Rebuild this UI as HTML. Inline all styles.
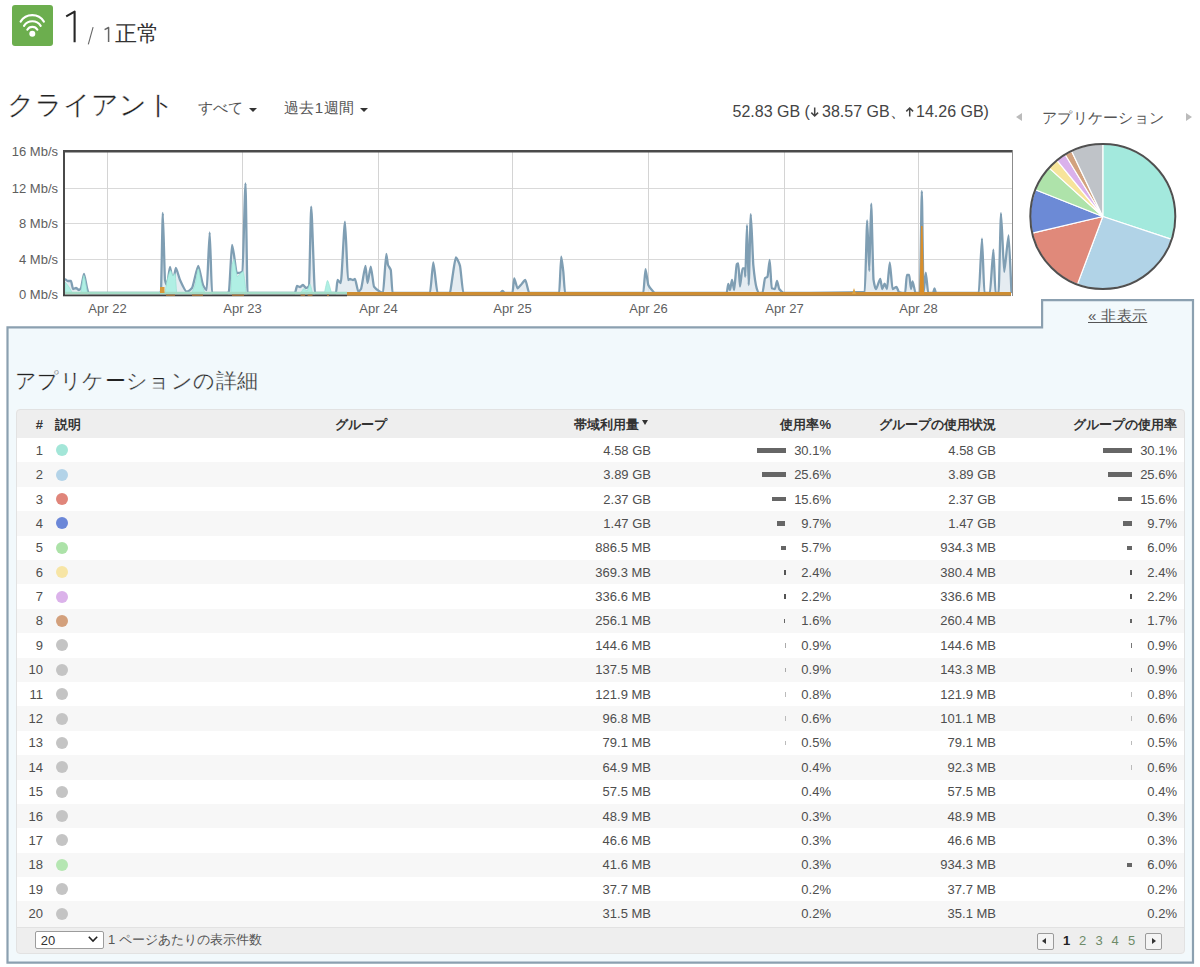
<!DOCTYPE html>
<html><head><meta charset="utf-8">
<style>
html,body{margin:0;padding:0;background:#fff;width:1200px;height:967px;overflow:hidden;position:relative;font-family:"Liberation Sans",sans-serif;color:#333}
.a{position:absolute;white-space:pre;line-height:1}
#hdr{left:0;top:0}
.tri{position:absolute;width:0;height:0}
.ylab{left:0;width:58px;text-align:right;font-size:13px;color:#5e5e5e;line-height:15px}
.xlab{top:301px;width:60px;text-align:center;font-size:13px;color:#5e5e5e;line-height:15px}
</style></head><body>

<!-- status header -->
<div class="a" style="left:12px;top:5px;width:41px;height:41px;background:#6cae4e;border-radius:3px"></div>
<svg class="a" style="left:12px;top:5px" width="41" height="41" viewBox="0 0 41 41">
  <g fill="none" stroke="#fff" stroke-width="2.1" stroke-linecap="round">
    <path d="M8.6 16.6 A13.7 13.7 0 0 1 31.9 16.6"/>
    <path d="M12 20.8 A10 10 0 0 1 28.7 20.8"/>
    <path d="M15.3 24.7 A5.9 5.9 0 0 1 25.4 24.7"/>
  </g>
  <circle cx="20.3" cy="28.8" r="3" fill="#fff"/>
</svg>
<svg class="a" style="left:60px;top:5px" width="55" height="45" viewBox="60 5 55 45">
  <path d="M66.2,16.3 L74.6,11.6 L74.6,42.3" fill="none" stroke="#262626" stroke-width="2.1" stroke-linejoin="round"/>
  <path d="M88.3,44.3 L93.1,27.2" fill="none" stroke="#666" stroke-width="1.1"/>
  <path d="M104.6,29.6 L108.6,27.5 L108.6,42" fill="none" stroke="#666" stroke-width="1.5" stroke-linejoin="round"/>
</svg>
<div class="a" style="left:115px;top:23px;font-size:22px;color:#333">正常</div>

<!-- clients title -->
<div class="a" style="left:7px;top:92px;font-size:26.5px;color:#222;-webkit-text-stroke:0.35px #fff">クライアント</div>
<div class="a" style="left:198px;top:99.5px;font-size:15px;color:#555">すべて</div>
<div class="tri" style="left:249px;top:108px;border-left:4px solid transparent;border-right:4px solid transparent;border-top:4px solid #333"></div>
<div class="a" style="left:283.5px;top:99.5px;font-size:15px;letter-spacing:0.6px;color:#555">過去1週間</div>
<div class="tri" style="left:360px;top:108px;border-left:4px solid transparent;border-right:4px solid transparent;border-top:4px solid #333"></div>

<div class="a" style="left:732.5px;top:104px;font-size:16px;color:#444">52.83 GB (</div>
<svg class="a" style="left:809.5px;top:106px" width="10" height="12" viewBox="0 0 10 12"><path d="M4.7 1.5 V10 M1.3 6.6 L4.7 10 L8.1 6.6" fill="none" stroke="#444" stroke-width="1.5"/></svg>
<div class="a" style="left:822px;top:104px;font-size:16px;color:#444">38.57 GB、</div>
<svg class="a" style="left:904.5px;top:106px" width="10" height="12" viewBox="0 0 10 12"><path d="M4.7 10.5 V2 M1.3 5.4 L4.7 2 L8.1 5.4" fill="none" stroke="#444" stroke-width="1.5"/></svg>
<div class="a" style="left:916px;top:104px;font-size:16px;color:#444">14.26 GB)</div>

<div class="tri" style="left:1016px;top:113px;border-top:4.5px solid transparent;border-bottom:4.5px solid transparent;border-right:6px solid #bbb"></div>
<div class="a" style="left:1042px;top:109.5px;font-size:15.4px;letter-spacing:0.3px;color:#555">アプリケーション</div>
<div class="tri" style="left:1186px;top:113px;border-top:4.5px solid transparent;border-bottom:4.5px solid transparent;border-left:6px solid #bbb"></div>

<!-- CHART -->
<svg class="a" style="left:0;top:0" width="1200" height="330" viewBox="0 0 1200 330">
<line x1="65" y1="188.5" x2="1012" y2="188.5" stroke="#d9d9d9" stroke-width="1"/>
<line x1="65" y1="223.5" x2="1012" y2="223.5" stroke="#d9d9d9" stroke-width="1"/>
<line x1="65" y1="259.5" x2="1012" y2="259.5" stroke="#d9d9d9" stroke-width="1"/>
<line x1="107.5" y1="152" x2="107.5" y2="294" stroke="#d4d4d4" stroke-width="1"/>
<line x1="242.5" y1="152" x2="242.5" y2="294" stroke="#d4d4d4" stroke-width="1"/>
<line x1="378.5" y1="152" x2="378.5" y2="294" stroke="#d4d4d4" stroke-width="1"/>
<line x1="512.5" y1="152" x2="512.5" y2="294" stroke="#d4d4d4" stroke-width="1"/>
<line x1="648.5" y1="152" x2="648.5" y2="294" stroke="#d4d4d4" stroke-width="1"/>
<line x1="784.5" y1="152" x2="784.5" y2="294" stroke="#d4d4d4" stroke-width="1"/>
<line x1="918.5" y1="152" x2="918.5" y2="294" stroke="#d4d4d4" stroke-width="1"/>
<path d="M65.00,279.00 C65.60,279.40 67.40,281.00 68.00,281.00 C68.60,281.00 70.40,281.00 71.00,281.00 C71.40,281.00 72.60,289.00 73.00,289.00 C73.60,289.00 75.40,288.00 76.00,288.00 C76.60,288.00 78.40,290.00 79.00,290.00 C79.40,290.00 80.60,288.63 81.00,288.00 C81.60,287.05 83.40,274.00 84.00,274.00 C84.60,274.00 86.40,285.71 87.00,288.00 C87.30,289.15 88.20,293.00 88.50,293.00 C102.80,293.00 145.70,293.00 160.00,293.00 C160.20,293.00 160.80,291.70 161.00,291.00 C161.36,289.73 162.44,213.00 162.80,213.00 C163.24,213.00 164.56,277.99 165.00,280.00 C165.40,281.82 166.60,285.00 167.00,285.00 C167.60,285.00 169.40,267.00 170.00,267.00 C170.60,267.00 172.40,282.00 173.00,282.00 C173.56,282.00 175.24,268.00 175.80,268.00 C176.64,268.00 179.16,278.14 180.00,280.00 C181.34,282.96 185.36,291.70 186.70,291.70 C187.76,291.70 190.94,289.21 192.00,288.00 C193.26,286.56 197.04,266.00 198.30,266.00 C199.24,266.00 202.06,283.13 203.00,285.00 C203.74,286.47 205.96,290.00 206.70,290.00 C207.30,290.00 209.10,232.50 209.70,232.50 C210.16,232.50 211.54,293.00 212.00,293.00 C215.20,293.00 224.80,293.00 228.00,293.00 C228.20,293.00 228.80,291.63 229.00,291.00 C229.60,289.12 231.40,245.00 232.00,245.00 C232.40,245.00 233.60,252.73 234.00,255.00 C234.54,258.06 236.16,273.00 236.70,273.00 C237.86,273.00 241.34,272.28 242.50,271.70 C243.10,271.40 244.90,183.30 245.50,183.30 C245.90,183.30 247.10,293.00 247.50,293.00 C257.00,293.00 285.50,293.00 295.00,293.00 C295.40,293.00 296.60,286.00 297.00,286.00 C297.60,286.00 299.40,287.00 300.00,287.00 C300.60,287.00 302.40,285.00 303.00,285.00 C303.60,285.00 305.40,288.00 306.00,288.00 C306.60,288.00 308.40,286.83 309.00,286.00 C309.44,285.39 310.76,206.70 311.20,206.70 C311.96,206.70 314.24,293.00 315.00,293.00 C319.20,293.00 331.80,293.00 336.00,293.00 C336.30,293.00 337.20,280.00 337.50,280.00 C338.16,280.00 340.14,283.00 340.80,283.00 C341.64,283.00 344.16,221.70 345.00,221.70 C345.60,221.70 347.40,280.00 348.00,280.00 C348.40,280.00 349.60,279.00 350.00,279.00 C350.60,279.00 352.40,280.00 353.00,280.00 C353.40,280.00 354.60,279.00 355.00,279.00 C355.66,279.00 357.64,291.70 358.30,291.70 C358.84,291.70 360.46,289.86 361.00,289.00 C361.90,287.57 364.60,266.00 365.50,266.00 C365.90,266.00 367.10,283.00 367.50,283.00 C368.16,283.00 370.14,266.70 370.80,266.70 C371.44,266.70 373.36,285.68 374.00,286.70 C375.20,288.61 378.80,291.04 380.00,291.70 C380.60,292.03 382.40,293.00 383.00,293.00 C383.66,293.00 385.64,254.00 386.30,254.00 C386.64,254.00 387.66,264.00 388.00,265.00 C388.56,266.64 390.24,268.12 390.80,270.00 C391.14,271.14 392.16,293.00 392.50,293.00 C400.00,293.00 422.50,293.00 430.00,293.00 C430.66,293.00 432.64,262.50 433.30,262.50 C434.14,262.50 436.66,293.00 437.50,293.00 C439.80,293.00 446.70,293.00 449.00,293.00 C449.20,293.00 449.80,292.67 450.00,292.50 C450.50,292.09 452.00,279.74 452.50,276.70 C453.16,272.69 455.14,257.50 455.80,257.50 C456.64,257.50 459.16,263.05 460.00,265.80 C460.66,267.96 462.64,293.00 463.30,293.00 C470.64,293.00 492.66,293.00 500.00,293.00 C500.50,293.00 502.00,290.80 502.50,290.80 C503.00,290.80 504.50,293.00 505.00,293.00 C506.50,293.00 511.00,293.00 512.50,293.00 C512.84,293.00 513.86,278.30 514.20,278.30 C514.86,278.30 516.84,288.30 517.50,288.30 C518.34,288.30 520.86,284.90 521.70,284.00 C522.42,283.23 524.58,280.00 525.30,280.00 C526.08,280.00 528.42,293.00 529.20,293.00 C535.20,293.00 553.20,293.00 559.20,293.00 C559.60,293.00 560.80,256.70 561.20,256.70 C561.62,256.70 562.88,267.84 563.30,271.70 C563.64,274.82 564.66,293.00 565.00,293.00 C580.66,293.00 627.64,293.00 643.30,293.00 C643.74,293.00 645.06,269.20 645.50,269.20 C646.06,269.20 647.74,283.71 648.30,285.00 C649.14,286.94 651.66,289.91 652.50,290.80 C653.00,291.33 654.50,293.00 655.00,293.00 C669.34,293.00 712.36,293.00 726.70,293.00 C727.02,293.00 727.98,284.00 728.30,284.00 C728.64,284.00 729.66,290.00 730.00,290.00 C730.40,290.00 731.60,280.00 732.00,280.00 C732.44,280.00 733.76,290.00 734.20,290.00 C734.70,290.00 736.20,264.70 736.70,264.20 C737.02,263.88 737.98,263.30 738.30,263.30 C738.64,263.30 739.66,286.70 740.00,286.70 C740.50,286.70 742.00,268.30 742.50,268.30 C742.94,268.30 744.26,268.30 744.70,268.30 C744.82,268.30 745.18,276.70 745.30,276.70 C745.64,276.70 746.66,225.00 747.00,225.00 C747.34,225.00 748.36,285.00 748.70,285.00 C749.12,285.00 750.38,214.20 750.80,214.20 C751.30,214.20 752.80,259.74 753.30,265.00 C753.98,272.15 756.02,286.35 756.70,288.30 C757.20,289.73 758.70,293.00 759.20,293.00 C759.86,293.00 761.84,293.00 762.50,293.00 C763.00,293.00 764.50,278.88 765.00,278.30 C765.50,277.72 767.00,277.30 767.50,276.70 C767.94,276.17 769.26,260.00 769.70,260.00 C770.10,260.00 771.30,288.12 771.70,288.30 C772.36,288.60 774.34,289.00 775.00,289.00 C775.40,289.00 776.60,280.80 777.00,280.80 C777.44,280.80 778.76,288.37 779.20,289.00 C780.20,290.44 783.20,293.00 784.20,293.00 C800.32,293.00 848.68,292.58 864.80,292.00 C865.28,291.98 866.72,220.40 867.20,220.40 C867.62,220.40 868.88,271.00 869.30,271.00 C869.68,271.00 870.82,203.70 871.20,203.70 C871.66,203.70 873.04,276.43 873.50,279.70 C873.98,283.11 875.42,289.20 875.90,289.20 C876.78,289.20 879.42,279.00 880.30,279.00 C880.68,279.00 881.82,289.00 882.20,289.00 C882.68,289.00 884.12,283.70 884.60,283.70 C885.08,283.70 886.52,289.00 887.00,289.00 C887.56,289.00 889.24,262.30 889.80,262.30 C890.34,262.30 891.96,289.00 892.50,289.00 C893.30,289.00 895.70,286.90 896.50,286.90 C896.98,286.90 898.42,291.84 898.90,292.00 C900.16,292.43 903.94,293.00 905.20,293.00 C905.52,293.00 906.48,275.00 906.80,275.00 C907.28,275.00 908.72,275.00 909.20,275.00 C909.56,275.00 910.64,289.00 911.00,289.00 C911.32,289.00 912.28,281.30 912.60,281.30 C913.18,281.30 914.92,293.00 915.50,293.00 C916.40,293.00 919.10,293.00 920.00,293.00 C920.36,293.00 921.44,191.10 921.80,191.10 C922.14,191.10 923.16,293.00 923.50,293.00 C923.96,293.00 925.34,272.60 925.80,272.60 C926.28,272.60 927.72,293.00 928.20,293.00 C929.16,293.00 932.04,293.00 933.00,293.00 C933.30,293.00 934.20,288.50 934.50,288.50 C934.80,288.50 935.70,293.00 936.00,293.00 C944.56,293.00 970.24,293.00 978.80,293.00 C979.44,293.00 981.36,238.60 982.00,238.60 C982.48,238.60 983.92,293.00 984.40,293.00 C985.50,293.00 988.80,293.00 989.90,293.00 C990.60,293.00 992.70,249.70 993.40,249.70 C993.82,249.70 995.08,293.00 995.50,293.00 C996.12,293.00 997.98,293.00 998.60,293.00 C999.08,293.00 1000.52,213.20 1001.00,213.20 C1001.64,213.20 1003.56,271.80 1004.20,271.80 C1005.08,271.80 1007.72,235.40 1008.60,235.40 C1009.18,235.40 1010.92,281.48 1011.50,293.00 L1011.5,294 L65,294 Z" fill="#dfe7ed" fill-opacity="0.8"/>
<path d="M65.00,279.00 C65.60,279.40 67.40,281.00 68.00,281.00 C68.60,281.00 70.40,281.00 71.00,281.00 C71.40,281.00 72.60,289.00 73.00,289.00 C73.60,289.00 75.40,288.00 76.00,288.00 C76.60,288.00 78.40,290.00 79.00,290.00 C79.40,290.00 80.60,288.63 81.00,288.00 C81.60,287.05 83.40,274.00 84.00,274.00 C84.60,274.00 86.40,285.71 87.00,288.00 C87.30,289.15 88.20,293.00 88.50,293.00 C102.80,293.00 145.70,293.00 160.00,293.00 C160.20,293.00 160.80,291.70 161.00,291.00 C161.36,289.73 162.44,213.00 162.80,213.00 C163.24,213.00 164.56,277.99 165.00,280.00 C165.40,281.82 166.60,285.00 167.00,285.00 C167.60,285.00 169.40,267.00 170.00,267.00 C170.60,267.00 172.40,282.00 173.00,282.00 C173.56,282.00 175.24,268.00 175.80,268.00 C176.64,268.00 179.16,278.14 180.00,280.00 C181.34,282.96 185.36,291.70 186.70,291.70 C187.76,291.70 190.94,289.21 192.00,288.00 C193.26,286.56 197.04,266.00 198.30,266.00 C199.24,266.00 202.06,283.13 203.00,285.00 C203.74,286.47 205.96,290.00 206.70,290.00 C207.30,290.00 209.10,232.50 209.70,232.50 C210.16,232.50 211.54,293.00 212.00,293.00 C215.20,293.00 224.80,293.00 228.00,293.00 C228.20,293.00 228.80,291.63 229.00,291.00 C229.60,289.12 231.40,245.00 232.00,245.00 C232.40,245.00 233.60,252.73 234.00,255.00 C234.54,258.06 236.16,273.00 236.70,273.00 C237.86,273.00 241.34,272.28 242.50,271.70 C243.10,271.40 244.90,183.30 245.50,183.30 C245.90,183.30 247.10,293.00 247.50,293.00 C257.00,293.00 285.50,293.00 295.00,293.00 C295.40,293.00 296.60,286.00 297.00,286.00 C297.60,286.00 299.40,287.00 300.00,287.00 C300.60,287.00 302.40,285.00 303.00,285.00 C303.60,285.00 305.40,288.00 306.00,288.00 C306.60,288.00 308.40,286.83 309.00,286.00 C309.44,285.39 310.76,206.70 311.20,206.70 C311.96,206.70 314.24,293.00 315.00,293.00 C319.20,293.00 331.80,293.00 336.00,293.00 C336.30,293.00 337.20,280.00 337.50,280.00 C338.16,280.00 340.14,283.00 340.80,283.00 C341.64,283.00 344.16,221.70 345.00,221.70 C345.60,221.70 347.40,280.00 348.00,280.00 C348.40,280.00 349.60,279.00 350.00,279.00 C350.60,279.00 352.40,280.00 353.00,280.00 C353.40,280.00 354.60,279.00 355.00,279.00 C355.66,279.00 357.64,291.70 358.30,291.70 C358.84,291.70 360.46,289.86 361.00,289.00 C361.90,287.57 364.60,266.00 365.50,266.00 C365.90,266.00 367.10,283.00 367.50,283.00 C368.16,283.00 370.14,266.70 370.80,266.70 C371.44,266.70 373.36,285.68 374.00,286.70 C375.20,288.61 378.80,291.04 380.00,291.70 C380.60,292.03 382.40,293.00 383.00,293.00 C383.66,293.00 385.64,254.00 386.30,254.00 C386.64,254.00 387.66,264.00 388.00,265.00 C388.56,266.64 390.24,268.12 390.80,270.00 C391.14,271.14 392.16,293.00 392.50,293.00 C400.00,293.00 422.50,293.00 430.00,293.00 C430.66,293.00 432.64,262.50 433.30,262.50 C434.14,262.50 436.66,293.00 437.50,293.00 C439.80,293.00 446.70,293.00 449.00,293.00 C449.20,293.00 449.80,292.67 450.00,292.50 C450.50,292.09 452.00,279.74 452.50,276.70 C453.16,272.69 455.14,257.50 455.80,257.50 C456.64,257.50 459.16,263.05 460.00,265.80 C460.66,267.96 462.64,293.00 463.30,293.00 C470.64,293.00 492.66,293.00 500.00,293.00 C500.50,293.00 502.00,290.80 502.50,290.80 C503.00,290.80 504.50,293.00 505.00,293.00 C506.50,293.00 511.00,293.00 512.50,293.00 C512.84,293.00 513.86,278.30 514.20,278.30 C514.86,278.30 516.84,288.30 517.50,288.30 C518.34,288.30 520.86,284.90 521.70,284.00 C522.42,283.23 524.58,280.00 525.30,280.00 C526.08,280.00 528.42,293.00 529.20,293.00 C535.20,293.00 553.20,293.00 559.20,293.00 C559.60,293.00 560.80,256.70 561.20,256.70 C561.62,256.70 562.88,267.84 563.30,271.70 C563.64,274.82 564.66,293.00 565.00,293.00 C580.66,293.00 627.64,293.00 643.30,293.00 C643.74,293.00 645.06,269.20 645.50,269.20 C646.06,269.20 647.74,283.71 648.30,285.00 C649.14,286.94 651.66,289.91 652.50,290.80 C653.00,291.33 654.50,293.00 655.00,293.00 C669.34,293.00 712.36,293.00 726.70,293.00 C727.02,293.00 727.98,284.00 728.30,284.00 C728.64,284.00 729.66,290.00 730.00,290.00 C730.40,290.00 731.60,280.00 732.00,280.00 C732.44,280.00 733.76,290.00 734.20,290.00 C734.70,290.00 736.20,264.70 736.70,264.20 C737.02,263.88 737.98,263.30 738.30,263.30 C738.64,263.30 739.66,286.70 740.00,286.70 C740.50,286.70 742.00,268.30 742.50,268.30 C742.94,268.30 744.26,268.30 744.70,268.30 C744.82,268.30 745.18,276.70 745.30,276.70 C745.64,276.70 746.66,225.00 747.00,225.00 C747.34,225.00 748.36,285.00 748.70,285.00 C749.12,285.00 750.38,214.20 750.80,214.20 C751.30,214.20 752.80,259.74 753.30,265.00 C753.98,272.15 756.02,286.35 756.70,288.30 C757.20,289.73 758.70,293.00 759.20,293.00 C759.86,293.00 761.84,293.00 762.50,293.00 C763.00,293.00 764.50,278.88 765.00,278.30 C765.50,277.72 767.00,277.30 767.50,276.70 C767.94,276.17 769.26,260.00 769.70,260.00 C770.10,260.00 771.30,288.12 771.70,288.30 C772.36,288.60 774.34,289.00 775.00,289.00 C775.40,289.00 776.60,280.80 777.00,280.80 C777.44,280.80 778.76,288.37 779.20,289.00 C780.20,290.44 783.20,293.00 784.20,293.00 C800.32,293.00 848.68,292.58 864.80,292.00 C865.28,291.98 866.72,220.40 867.20,220.40 C867.62,220.40 868.88,271.00 869.30,271.00 C869.68,271.00 870.82,203.70 871.20,203.70 C871.66,203.70 873.04,276.43 873.50,279.70 C873.98,283.11 875.42,289.20 875.90,289.20 C876.78,289.20 879.42,279.00 880.30,279.00 C880.68,279.00 881.82,289.00 882.20,289.00 C882.68,289.00 884.12,283.70 884.60,283.70 C885.08,283.70 886.52,289.00 887.00,289.00 C887.56,289.00 889.24,262.30 889.80,262.30 C890.34,262.30 891.96,289.00 892.50,289.00 C893.30,289.00 895.70,286.90 896.50,286.90 C896.98,286.90 898.42,291.84 898.90,292.00 C900.16,292.43 903.94,293.00 905.20,293.00 C905.52,293.00 906.48,275.00 906.80,275.00 C907.28,275.00 908.72,275.00 909.20,275.00 C909.56,275.00 910.64,289.00 911.00,289.00 C911.32,289.00 912.28,281.30 912.60,281.30 C913.18,281.30 914.92,293.00 915.50,293.00 C916.40,293.00 919.10,293.00 920.00,293.00 C920.36,293.00 921.44,191.10 921.80,191.10 C922.14,191.10 923.16,293.00 923.50,293.00 C923.96,293.00 925.34,272.60 925.80,272.60 C926.28,272.60 927.72,293.00 928.20,293.00 C929.16,293.00 932.04,293.00 933.00,293.00 C933.30,293.00 934.20,288.50 934.50,288.50 C934.80,288.50 935.70,293.00 936.00,293.00 C944.56,293.00 970.24,293.00 978.80,293.00 C979.44,293.00 981.36,238.60 982.00,238.60 C982.48,238.60 983.92,293.00 984.40,293.00 C985.50,293.00 988.80,293.00 989.90,293.00 C990.60,293.00 992.70,249.70 993.40,249.70 C993.82,249.70 995.08,293.00 995.50,293.00 C996.12,293.00 997.98,293.00 998.60,293.00 C999.08,293.00 1000.52,213.20 1001.00,213.20 C1001.64,213.20 1003.56,271.80 1004.20,271.80 C1005.08,271.80 1007.72,235.40 1008.60,235.40 C1009.18,235.40 1010.92,281.48 1011.50,293.00" fill="none" stroke="#7f9eb3" stroke-width="2.3" stroke-linejoin="round"/>
<path d="M65.00,293.00 C65.00,293.00 65.00,282.00 65.00,282.00 C65.20,282.00 65.80,282.78 66.00,283.00 C66.60,283.67 68.40,286.10 69.00,287.00 C69.70,288.05 71.80,291.80 72.50,293.00 Z" fill="#b0efe4" stroke="#97e2d3" stroke-width="0.7"/>
<path d="M80.80,293.00 C81.40,289.50 83.20,275.50 83.80,275.50 C84.54,275.50 86.76,289.50 87.50,293.00 Z" fill="#b0efe4" stroke="#97e2d3" stroke-width="0.7"/>
<path d="M165.00,293.00 C165.40,290.60 166.60,282.65 167.00,281.00 C167.70,278.11 169.80,270.50 170.50,270.50 C171.00,270.50 172.50,276.00 173.00,276.00 C173.40,276.00 174.60,273.50 175.00,273.50 C175.34,273.50 176.36,289.10 176.70,293.00 Z" fill="#b0efe4" stroke="#97e2d3" stroke-width="0.7"/>
<path d="M191.70,293.00 C192.36,291.40 194.34,287.14 195.00,285.00 C195.66,282.86 197.64,268.80 198.30,268.80 C198.94,268.80 200.86,281.86 201.50,284.00 C202.20,286.35 204.30,291.20 205.00,293.00 Z" fill="#b0efe4" stroke="#97e2d3" stroke-width="0.7"/>
<path d="M230.80,293.00 C231.10,287.20 232.00,265.42 232.30,264.00 C232.64,262.39 233.66,259.50 234.00,259.50 C234.30,259.50 235.20,266.39 235.50,268.00 C235.84,269.82 236.86,276.60 237.20,276.60 C237.76,276.60 239.44,274.48 240.00,274.00 C240.64,273.46 242.56,271.50 243.20,271.50 C243.52,271.50 244.48,278.59 244.80,281.00 C245.04,282.81 245.76,290.60 246.00,293.00 Z" fill="#b0efe4" stroke="#97e2d3" stroke-width="0.7"/>
<path d="M300.60,293.00 C301.28,292.10 303.32,288.50 304.00,288.50 C304.60,288.50 306.40,291.00 307.00,291.00 C307.60,291.00 309.40,284.20 310.00,284.20 C310.50,284.20 312.00,291.24 312.50,293.00 Z" fill="#b0efe4" stroke="#97e2d3" stroke-width="0.7"/>
<path d="M324.40,293.00 C325.02,290.48 326.88,280.40 327.50,280.40 C328.30,280.40 330.70,290.48 331.50,293.00 Z" fill="#b0efe4" stroke="#97e2d3" stroke-width="0.7"/>
<line x1="65" y1="293" x2="347" y2="293" stroke="#a3dcc6" stroke-width="2.6"/>
<line x1="347" y1="293.7" x2="1011" y2="293.7" stroke="#cd8d33" stroke-width="3.2"/>
<line x1="347" y1="295.6" x2="1011" y2="295.6" stroke="#8c6d42" stroke-width="0.9"/>
<polygon points="920.3,294 921.8,226 923.3,294" fill="#d98e2a" stroke="#d98e2a" stroke-width="1.5"/>
<polygon points="852,294 854,288 856,294" fill="#d9a040"/>
<rect x="160" y="287" width="4.5" height="6" fill="#d89a3a"/>
<rect x="63" y="150" width="950" height="2.5" fill="#4a4a4a"/>
<rect x="63" y="150" width="2" height="146" fill="#4a4a4a"/>
<rect x="1012" y="150" width="1" height="146" fill="#8c8c8c"/>
<rect x="63" y="294.5" width="284" height="1.8" fill="#3d3d3d"/>
<line x1="232" y1="295.2" x2="244" y2="295.2" stroke="#a8743a" stroke-width="1.4"/>
<line x1="300.6" y1="295.2" x2="305" y2="295.2" stroke="#a8743a" stroke-width="1.4"/>
<line x1="307.6" y1="295.2" x2="312.5" y2="295.2" stroke="#a8743a" stroke-width="1.4"/>
<line x1="327" y1="295.2" x2="329" y2="295.2" stroke="#a8743a" stroke-width="1.4"/>
<line x1="166" y1="295.2" x2="175" y2="295.2" stroke="#a8743a" stroke-width="1.4"/>
<line x1="192" y1="295.2" x2="203" y2="295.2" stroke="#a8743a" stroke-width="1.4"/>
</svg>
<div class="a ylab" style="top:143.5px">16 Mb/s</div>
<div class="a ylab" style="top:180.5px">12 Mb/s</div>
<div class="a ylab" style="top:216.0px">8 Mb/s</div>
<div class="a ylab" style="top:252.0px">4 Mb/s</div>
<div class="a ylab" style="top:286.5px">0 Mb/s</div>
<div class="a xlab" style="left:77.5px">Apr 22</div>
<div class="a xlab" style="left:212.5px">Apr 23</div>
<div class="a xlab" style="left:348.5px">Apr 24</div>
<div class="a xlab" style="left:482.5px">Apr 25</div>
<div class="a xlab" style="left:618.5px">Apr 26</div>
<div class="a xlab" style="left:754.5px">Apr 27</div>
<div class="a xlab" style="left:888.5px">Apr 28</div>

<!-- PIE -->
<svg class="a" style="left:1020px;top:135px" width="170" height="165" viewBox="1020 135 170 165">
<path d="M1102.8,216.5 L1102.80,144.00 A72.5,72.5 0 0 1 1171.61,239.34 Z" fill="#a3e9dd" stroke="#fff" stroke-width="1.2" stroke-linejoin="round"/>
<path d="M1102.8,216.5 L1171.61,239.34 A72.5,72.5 0 0 1 1077.39,284.40 Z" fill="#b1d3e7" stroke="#fff" stroke-width="1.2" stroke-linejoin="round"/>
<path d="M1102.8,216.5 L1077.39,284.40 A72.5,72.5 0 0 1 1032.25,233.20 Z" fill="#e0897a" stroke="#fff" stroke-width="1.2" stroke-linejoin="round"/>
<path d="M1102.8,216.5 L1032.25,233.20 A72.5,72.5 0 0 1 1035.39,189.81 Z" fill="#6c8ad6" stroke="#fff" stroke-width="1.2" stroke-linejoin="round"/>
<path d="M1102.8,216.5 L1035.39,189.81 A72.5,72.5 0 0 1 1049.02,167.88 Z" fill="#aee3aa" stroke="#fff" stroke-width="1.2" stroke-linejoin="round"/>
<path d="M1102.8,216.5 L1049.02,167.88 A72.5,72.5 0 0 1 1056.94,160.35 Z" fill="#f7e49a" stroke="#fff" stroke-width="1.2" stroke-linejoin="round"/>
<path d="M1102.8,216.5 L1056.94,160.35 A72.5,72.5 0 0 1 1065.11,154.56 Z" fill="#dab1ec" stroke="#fff" stroke-width="1.2" stroke-linejoin="round"/>
<path d="M1102.8,216.5 L1065.11,154.56 A72.5,72.5 0 0 1 1071.52,151.10 Z" fill="#d2a27e" stroke="#fff" stroke-width="1.2" stroke-linejoin="round"/>
<path d="M1102.8,216.5 L1071.52,151.10 A72.5,72.5 0 0 1 1102.80,144.00 Z" fill="#bfc3c8" stroke="#fff" stroke-width="1.2" stroke-linejoin="round"/>
<circle cx="1102.8" cy="216.5" r="72.5" fill="none" stroke="#505050" stroke-width="2"/>
</svg>

<!-- PANEL -->
<svg class="a" style="left:0;top:290px" width="1200" height="677" viewBox="0 290 1200 677">
<path d="M7.5,327.3 L1042.1,327.3 L1042.1,300.1 L1193,300.1 L1193,962.6 L7.5,962.6 Z" fill="#f2f9fc" stroke="#8ba0b0" stroke-width="2.2"/>
</svg>
<div class="a" style="left:1088px;top:307px;font-size:15px;letter-spacing:0.35px;color:#555;text-decoration:underline;line-height:17px">« 非表示</div>
<div class="a" style="left:15px;top:368px;letter-spacing:0.4px;font-size:21px;color:#222;-webkit-text-stroke:0.3px #f2f9fc;line-height:25px">アプリケーションの詳細</div>
<div class="a" style="left:16px;top:409px;width:1168.5px;height:545px;border-radius:4px;overflow:hidden;background:#fff">
<div class="a" style="left:0;top:0;width:100%;height:28.8px;background:#eeeeee;border-bottom:1px solid #e0e0e0"></div>
<div class="a" style="left:0;top:29.05px;width:100%;height:25.59px;background:#fff"></div>
<div class="a" style="left:0;top:53.44px;width:100%;height:25.59px;background:#f7f7f7"></div>
<div class="a" style="left:0;top:77.83px;width:100%;height:25.59px;background:#fff"></div>
<div class="a" style="left:0;top:102.22px;width:100%;height:25.59px;background:#f7f7f7"></div>
<div class="a" style="left:0;top:126.61px;width:100%;height:25.59px;background:#fff"></div>
<div class="a" style="left:0;top:151.00px;width:100%;height:25.59px;background:#f7f7f7"></div>
<div class="a" style="left:0;top:175.39px;width:100%;height:25.59px;background:#fff"></div>
<div class="a" style="left:0;top:199.78px;width:100%;height:25.59px;background:#f7f7f7"></div>
<div class="a" style="left:0;top:224.17px;width:100%;height:25.59px;background:#fff"></div>
<div class="a" style="left:0;top:248.56px;width:100%;height:25.59px;background:#f7f7f7"></div>
<div class="a" style="left:0;top:272.95px;width:100%;height:25.59px;background:#fff"></div>
<div class="a" style="left:0;top:297.34px;width:100%;height:25.59px;background:#f7f7f7"></div>
<div class="a" style="left:0;top:321.73px;width:100%;height:25.59px;background:#fff"></div>
<div class="a" style="left:0;top:346.12px;width:100%;height:25.59px;background:#f7f7f7"></div>
<div class="a" style="left:0;top:370.51px;width:100%;height:25.59px;background:#fff"></div>
<div class="a" style="left:0;top:394.90px;width:100%;height:25.59px;background:#f7f7f7"></div>
<div class="a" style="left:0;top:419.29px;width:100%;height:25.59px;background:#fff"></div>
<div class="a" style="left:0;top:443.68px;width:100%;height:25.59px;background:#f7f7f7"></div>
<div class="a" style="left:0;top:468.07px;width:100%;height:25.59px;background:#fff"></div>
<div class="a" style="left:0;top:492.46px;width:100%;height:25.59px;background:#f7f7f7"></div>
<div class="a" style="left:0;top:517.65px;width:100%;height:27.35px;background:#eeeeee;border-top:1px solid #e2e2e2"></div>
<div class="a" style="left:0;top:0;width:1168.5px;height:545px;box-sizing:border-box;border:1px solid #e2e2e2;border-radius:4px"></div>
</div>
<div class="a" style="left:-257px;width:300px;text-align:right;top:417px;font-size:13px;font-weight:bold;color:#333;line-height:15px">#</div>
<div class="a" style="left:55px;top:417px;font-size:13px;font-weight:bold;color:#333;line-height:15px">説明</div>
<div class="a" style="left:261px;width:200px;text-align:center;top:417px;font-size:13px;font-weight:bold;color:#333;line-height:15px">グループ</div>
<div class="a" style="left:339px;width:300px;text-align:right;top:417px;font-size:13px;font-weight:bold;color:#333;line-height:15px">帯域利用量</div>
<div class="tri" style="left:642px;top:420px;border-left:3px solid transparent;border-right:3px solid transparent;border-top:5px solid #333"></div>
<div class="a" style="left:531px;width:300px;text-align:right;top:417px;font-size:13px;font-weight:bold;color:#333;line-height:15px">使用率%</div>
<div class="a" style="left:696px;width:300px;text-align:right;top:417px;font-size:13px;font-weight:bold;color:#333;line-height:15px">グループの使用状況</div>
<div class="a" style="left:877px;width:300px;text-align:right;top:417px;font-size:13px;font-weight:bold;color:#333;line-height:15px">グループの使用率</div>
<div class="a" style="left:-157px;top:442.75px;width:200px;text-align:right;font-size:13px;color:#4e4e4e;line-height:15px">1</div>
<div class="a" style="left:56px;top:444.25px;width:12px;height:12px;border-radius:50%;background:#a3e6d8"></div>
<div class="a" style="left:451px;top:442.75px;width:200px;text-align:right;font-size:13px;color:#4e4e4e;line-height:15px">4.58 GB</div>
<div class="a" style="left:631px;top:442.75px;width:200px;text-align:right;font-size:13px;color:#4e4e4e;line-height:15px">30.1%</div>
<div class="a" style="left:796px;top:442.75px;width:200px;text-align:right;font-size:13px;color:#4e4e4e;line-height:15px">4.58 GB</div>
<div class="a" style="left:977px;top:442.75px;width:200px;text-align:right;font-size:13px;color:#4e4e4e;line-height:15px">30.1%</div>
<div class="a" style="left:756.50px;top:448.05px;width:29.00px;height:4.6px;background:#666"></div>
<div class="a" style="left:1103.00px;top:448.05px;width:29.00px;height:4.6px;background:#666"></div>
<div class="a" style="left:-157px;top:467.13px;width:200px;text-align:right;font-size:13px;color:#4e4e4e;line-height:15px">2</div>
<div class="a" style="left:56px;top:468.63px;width:12px;height:12px;border-radius:50%;background:#b3d3e8"></div>
<div class="a" style="left:451px;top:467.13px;width:200px;text-align:right;font-size:13px;color:#4e4e4e;line-height:15px">3.89 GB</div>
<div class="a" style="left:631px;top:467.13px;width:200px;text-align:right;font-size:13px;color:#4e4e4e;line-height:15px">25.6%</div>
<div class="a" style="left:796px;top:467.13px;width:200px;text-align:right;font-size:13px;color:#4e4e4e;line-height:15px">3.89 GB</div>
<div class="a" style="left:977px;top:467.13px;width:200px;text-align:right;font-size:13px;color:#4e4e4e;line-height:15px">25.6%</div>
<div class="a" style="left:761.50px;top:472.44px;width:24.00px;height:4.6px;background:#666"></div>
<div class="a" style="left:1108.00px;top:472.44px;width:24.00px;height:4.6px;background:#666"></div>
<div class="a" style="left:-157px;top:491.53px;width:200px;text-align:right;font-size:13px;color:#4e4e4e;line-height:15px">3</div>
<div class="a" style="left:56px;top:493.03px;width:12px;height:12px;border-radius:50%;background:#e0857a"></div>
<div class="a" style="left:451px;top:491.53px;width:200px;text-align:right;font-size:13px;color:#4e4e4e;line-height:15px">2.37 GB</div>
<div class="a" style="left:631px;top:491.53px;width:200px;text-align:right;font-size:13px;color:#4e4e4e;line-height:15px">15.6%</div>
<div class="a" style="left:796px;top:491.53px;width:200px;text-align:right;font-size:13px;color:#4e4e4e;line-height:15px">2.37 GB</div>
<div class="a" style="left:977px;top:491.53px;width:200px;text-align:right;font-size:13px;color:#4e4e4e;line-height:15px">15.6%</div>
<div class="a" style="left:771.50px;top:496.83px;width:14.00px;height:4.6px;background:#666"></div>
<div class="a" style="left:1118.00px;top:496.83px;width:14.00px;height:4.6px;background:#666"></div>
<div class="a" style="left:-157px;top:515.92px;width:200px;text-align:right;font-size:13px;color:#4e4e4e;line-height:15px">4</div>
<div class="a" style="left:56px;top:517.42px;width:12px;height:12px;border-radius:50%;background:#6b87d8"></div>
<div class="a" style="left:451px;top:515.92px;width:200px;text-align:right;font-size:13px;color:#4e4e4e;line-height:15px">1.47 GB</div>
<div class="a" style="left:631px;top:515.92px;width:200px;text-align:right;font-size:13px;color:#4e4e4e;line-height:15px">9.7%</div>
<div class="a" style="left:796px;top:515.92px;width:200px;text-align:right;font-size:13px;color:#4e4e4e;line-height:15px">1.47 GB</div>
<div class="a" style="left:977px;top:515.92px;width:200px;text-align:right;font-size:13px;color:#4e4e4e;line-height:15px">9.7%</div>
<div class="a" style="left:776.80px;top:521.22px;width:8.70px;height:4.6px;background:#666"></div>
<div class="a" style="left:1123.30px;top:521.22px;width:8.70px;height:4.6px;background:#666"></div>
<div class="a" style="left:-157px;top:540.31px;width:200px;text-align:right;font-size:13px;color:#4e4e4e;line-height:15px">5</div>
<div class="a" style="left:56px;top:541.81px;width:12px;height:12px;border-radius:50%;background:#ace2a8"></div>
<div class="a" style="left:451px;top:540.31px;width:200px;text-align:right;font-size:13px;color:#4e4e4e;line-height:15px">886.5 MB</div>
<div class="a" style="left:631px;top:540.31px;width:200px;text-align:right;font-size:13px;color:#4e4e4e;line-height:15px">5.7%</div>
<div class="a" style="left:796px;top:540.31px;width:200px;text-align:right;font-size:13px;color:#4e4e4e;line-height:15px">934.3 MB</div>
<div class="a" style="left:977px;top:540.31px;width:200px;text-align:right;font-size:13px;color:#4e4e4e;line-height:15px">6.0%</div>
<div class="a" style="left:781.00px;top:545.61px;width:4.50px;height:4.6px;background:#666"></div>
<div class="a" style="left:1127.30px;top:545.61px;width:4.70px;height:4.6px;background:#666"></div>
<div class="a" style="left:-157px;top:564.70px;width:200px;text-align:right;font-size:13px;color:#4e4e4e;line-height:15px">6</div>
<div class="a" style="left:56px;top:566.20px;width:12px;height:12px;border-radius:50%;background:#f7e5a5"></div>
<div class="a" style="left:451px;top:564.70px;width:200px;text-align:right;font-size:13px;color:#4e4e4e;line-height:15px">369.3 MB</div>
<div class="a" style="left:631px;top:564.70px;width:200px;text-align:right;font-size:13px;color:#4e4e4e;line-height:15px">2.4%</div>
<div class="a" style="left:796px;top:564.70px;width:200px;text-align:right;font-size:13px;color:#4e4e4e;line-height:15px">380.4 MB</div>
<div class="a" style="left:977px;top:564.70px;width:200px;text-align:right;font-size:13px;color:#4e4e4e;line-height:15px">2.4%</div>
<div class="a" style="left:783.50px;top:570.00px;width:2.00px;height:4.6px;background:#555"></div>
<div class="a" style="left:1130.00px;top:570.00px;width:2.00px;height:4.6px;background:#555"></div>
<div class="a" style="left:-157px;top:589.09px;width:200px;text-align:right;font-size:13px;color:#4e4e4e;line-height:15px">7</div>
<div class="a" style="left:56px;top:590.59px;width:12px;height:12px;border-radius:50%;background:#dbb2ea"></div>
<div class="a" style="left:451px;top:589.09px;width:200px;text-align:right;font-size:13px;color:#4e4e4e;line-height:15px">336.6 MB</div>
<div class="a" style="left:631px;top:589.09px;width:200px;text-align:right;font-size:13px;color:#4e4e4e;line-height:15px">2.2%</div>
<div class="a" style="left:796px;top:589.09px;width:200px;text-align:right;font-size:13px;color:#4e4e4e;line-height:15px">336.6 MB</div>
<div class="a" style="left:977px;top:589.09px;width:200px;text-align:right;font-size:13px;color:#4e4e4e;line-height:15px">2.2%</div>
<div class="a" style="left:783.50px;top:594.38px;width:2.00px;height:4.6px;background:#555"></div>
<div class="a" style="left:1130.00px;top:594.38px;width:2.00px;height:4.6px;background:#555"></div>
<div class="a" style="left:-157px;top:613.48px;width:200px;text-align:right;font-size:13px;color:#4e4e4e;line-height:15px">8</div>
<div class="a" style="left:56px;top:614.98px;width:12px;height:12px;border-radius:50%;background:#d3a07c"></div>
<div class="a" style="left:451px;top:613.48px;width:200px;text-align:right;font-size:13px;color:#4e4e4e;line-height:15px">256.1 MB</div>
<div class="a" style="left:631px;top:613.48px;width:200px;text-align:right;font-size:13px;color:#4e4e4e;line-height:15px">1.6%</div>
<div class="a" style="left:796px;top:613.48px;width:200px;text-align:right;font-size:13px;color:#4e4e4e;line-height:15px">260.4 MB</div>
<div class="a" style="left:977px;top:613.48px;width:200px;text-align:right;font-size:13px;color:#4e4e4e;line-height:15px">1.7%</div>
<div class="a" style="left:783.90px;top:618.77px;width:1.60px;height:4.6px;background:#666"></div>
<div class="a" style="left:1130.40px;top:618.77px;width:1.60px;height:4.6px;background:#666"></div>
<div class="a" style="left:-157px;top:637.87px;width:200px;text-align:right;font-size:13px;color:#4e4e4e;line-height:15px">9</div>
<div class="a" style="left:56px;top:639.37px;width:12px;height:12px;border-radius:50%;background:#c4c4c4"></div>
<div class="a" style="left:451px;top:637.87px;width:200px;text-align:right;font-size:13px;color:#4e4e4e;line-height:15px">144.6 MB</div>
<div class="a" style="left:631px;top:637.87px;width:200px;text-align:right;font-size:13px;color:#4e4e4e;line-height:15px">0.9%</div>
<div class="a" style="left:796px;top:637.87px;width:200px;text-align:right;font-size:13px;color:#4e4e4e;line-height:15px">144.6 MB</div>
<div class="a" style="left:977px;top:637.87px;width:200px;text-align:right;font-size:13px;color:#4e4e4e;line-height:15px">0.9%</div>
<div class="a" style="left:784.50px;top:643.17px;width:1.00px;height:4.6px;background:#aaa"></div>
<div class="a" style="left:1130.50px;top:643.17px;width:1.50px;height:4.6px;background:#777"></div>
<div class="a" style="left:-157px;top:662.25px;width:200px;text-align:right;font-size:13px;color:#4e4e4e;line-height:15px">10</div>
<div class="a" style="left:56px;top:663.75px;width:12px;height:12px;border-radius:50%;background:#c4c4c4"></div>
<div class="a" style="left:451px;top:662.25px;width:200px;text-align:right;font-size:13px;color:#4e4e4e;line-height:15px">137.5 MB</div>
<div class="a" style="left:631px;top:662.25px;width:200px;text-align:right;font-size:13px;color:#4e4e4e;line-height:15px">0.9%</div>
<div class="a" style="left:796px;top:662.25px;width:200px;text-align:right;font-size:13px;color:#4e4e4e;line-height:15px">143.3 MB</div>
<div class="a" style="left:977px;top:662.25px;width:200px;text-align:right;font-size:13px;color:#4e4e4e;line-height:15px">0.9%</div>
<div class="a" style="left:784.50px;top:667.55px;width:1.00px;height:4.6px;background:#aaa"></div>
<div class="a" style="left:1130.50px;top:667.55px;width:1.50px;height:4.6px;background:#777"></div>
<div class="a" style="left:-157px;top:686.65px;width:200px;text-align:right;font-size:13px;color:#4e4e4e;line-height:15px">11</div>
<div class="a" style="left:56px;top:688.15px;width:12px;height:12px;border-radius:50%;background:#c4c4c4"></div>
<div class="a" style="left:451px;top:686.65px;width:200px;text-align:right;font-size:13px;color:#4e4e4e;line-height:15px">121.9 MB</div>
<div class="a" style="left:631px;top:686.65px;width:200px;text-align:right;font-size:13px;color:#4e4e4e;line-height:15px">0.8%</div>
<div class="a" style="left:796px;top:686.65px;width:200px;text-align:right;font-size:13px;color:#4e4e4e;line-height:15px">121.9 MB</div>
<div class="a" style="left:977px;top:686.65px;width:200px;text-align:right;font-size:13px;color:#4e4e4e;line-height:15px">0.8%</div>
<div class="a" style="left:784.50px;top:691.95px;width:1.00px;height:4.6px;background:#bbb"></div>
<div class="a" style="left:1131.00px;top:691.95px;width:1.00px;height:4.6px;background:#bbb"></div>
<div class="a" style="left:-157px;top:711.04px;width:200px;text-align:right;font-size:13px;color:#4e4e4e;line-height:15px">12</div>
<div class="a" style="left:56px;top:712.54px;width:12px;height:12px;border-radius:50%;background:#c4c4c4"></div>
<div class="a" style="left:451px;top:711.04px;width:200px;text-align:right;font-size:13px;color:#4e4e4e;line-height:15px">96.8 MB</div>
<div class="a" style="left:631px;top:711.04px;width:200px;text-align:right;font-size:13px;color:#4e4e4e;line-height:15px">0.6%</div>
<div class="a" style="left:796px;top:711.04px;width:200px;text-align:right;font-size:13px;color:#4e4e4e;line-height:15px">101.1 MB</div>
<div class="a" style="left:977px;top:711.04px;width:200px;text-align:right;font-size:13px;color:#4e4e4e;line-height:15px">0.6%</div>
<div class="a" style="left:784.50px;top:716.34px;width:1.00px;height:4.6px;background:#bbb"></div>
<div class="a" style="left:1131.00px;top:716.34px;width:1.00px;height:4.6px;background:#bbb"></div>
<div class="a" style="left:-157px;top:735.43px;width:200px;text-align:right;font-size:13px;color:#4e4e4e;line-height:15px">13</div>
<div class="a" style="left:56px;top:736.93px;width:12px;height:12px;border-radius:50%;background:#c4c4c4"></div>
<div class="a" style="left:451px;top:735.43px;width:200px;text-align:right;font-size:13px;color:#4e4e4e;line-height:15px">79.1 MB</div>
<div class="a" style="left:631px;top:735.43px;width:200px;text-align:right;font-size:13px;color:#4e4e4e;line-height:15px">0.5%</div>
<div class="a" style="left:796px;top:735.43px;width:200px;text-align:right;font-size:13px;color:#4e4e4e;line-height:15px">79.1 MB</div>
<div class="a" style="left:977px;top:735.43px;width:200px;text-align:right;font-size:13px;color:#4e4e4e;line-height:15px">0.5%</div>
<div class="a" style="left:784.50px;top:740.73px;width:1.00px;height:4.6px;background:#bbb"></div>
<div class="a" style="left:1131.00px;top:740.73px;width:1.00px;height:4.6px;background:#bbb"></div>
<div class="a" style="left:-157px;top:759.82px;width:200px;text-align:right;font-size:13px;color:#4e4e4e;line-height:15px">14</div>
<div class="a" style="left:56px;top:761.32px;width:12px;height:12px;border-radius:50%;background:#c4c4c4"></div>
<div class="a" style="left:451px;top:759.82px;width:200px;text-align:right;font-size:13px;color:#4e4e4e;line-height:15px">64.9 MB</div>
<div class="a" style="left:631px;top:759.82px;width:200px;text-align:right;font-size:13px;color:#4e4e4e;line-height:15px">0.4%</div>
<div class="a" style="left:796px;top:759.82px;width:200px;text-align:right;font-size:13px;color:#4e4e4e;line-height:15px">92.3 MB</div>
<div class="a" style="left:977px;top:759.82px;width:200px;text-align:right;font-size:13px;color:#4e4e4e;line-height:15px">0.6%</div>
<div class="a" style="left:1131.00px;top:765.12px;width:1.00px;height:4.6px;background:#bbb"></div>
<div class="a" style="left:-157px;top:784.21px;width:200px;text-align:right;font-size:13px;color:#4e4e4e;line-height:15px">15</div>
<div class="a" style="left:56px;top:785.71px;width:12px;height:12px;border-radius:50%;background:#c4c4c4"></div>
<div class="a" style="left:451px;top:784.21px;width:200px;text-align:right;font-size:13px;color:#4e4e4e;line-height:15px">57.5 MB</div>
<div class="a" style="left:631px;top:784.21px;width:200px;text-align:right;font-size:13px;color:#4e4e4e;line-height:15px">0.4%</div>
<div class="a" style="left:796px;top:784.21px;width:200px;text-align:right;font-size:13px;color:#4e4e4e;line-height:15px">57.5 MB</div>
<div class="a" style="left:977px;top:784.21px;width:200px;text-align:right;font-size:13px;color:#4e4e4e;line-height:15px">0.4%</div>
<div class="a" style="left:-157px;top:808.60px;width:200px;text-align:right;font-size:13px;color:#4e4e4e;line-height:15px">16</div>
<div class="a" style="left:56px;top:810.10px;width:12px;height:12px;border-radius:50%;background:#c4c4c4"></div>
<div class="a" style="left:451px;top:808.60px;width:200px;text-align:right;font-size:13px;color:#4e4e4e;line-height:15px">48.9 MB</div>
<div class="a" style="left:631px;top:808.60px;width:200px;text-align:right;font-size:13px;color:#4e4e4e;line-height:15px">0.3%</div>
<div class="a" style="left:796px;top:808.60px;width:200px;text-align:right;font-size:13px;color:#4e4e4e;line-height:15px">48.9 MB</div>
<div class="a" style="left:977px;top:808.60px;width:200px;text-align:right;font-size:13px;color:#4e4e4e;line-height:15px">0.3%</div>
<div class="a" style="left:-157px;top:832.99px;width:200px;text-align:right;font-size:13px;color:#4e4e4e;line-height:15px">17</div>
<div class="a" style="left:56px;top:834.49px;width:12px;height:12px;border-radius:50%;background:#c4c4c4"></div>
<div class="a" style="left:451px;top:832.99px;width:200px;text-align:right;font-size:13px;color:#4e4e4e;line-height:15px">46.6 MB</div>
<div class="a" style="left:631px;top:832.99px;width:200px;text-align:right;font-size:13px;color:#4e4e4e;line-height:15px">0.3%</div>
<div class="a" style="left:796px;top:832.99px;width:200px;text-align:right;font-size:13px;color:#4e4e4e;line-height:15px">46.6 MB</div>
<div class="a" style="left:977px;top:832.99px;width:200px;text-align:right;font-size:13px;color:#4e4e4e;line-height:15px">0.3%</div>
<div class="a" style="left:-157px;top:857.38px;width:200px;text-align:right;font-size:13px;color:#4e4e4e;line-height:15px">18</div>
<div class="a" style="left:56px;top:858.88px;width:12px;height:12px;border-radius:50%;background:#b5e6b2"></div>
<div class="a" style="left:451px;top:857.38px;width:200px;text-align:right;font-size:13px;color:#4e4e4e;line-height:15px">41.6 MB</div>
<div class="a" style="left:631px;top:857.38px;width:200px;text-align:right;font-size:13px;color:#4e4e4e;line-height:15px">0.3%</div>
<div class="a" style="left:796px;top:857.38px;width:200px;text-align:right;font-size:13px;color:#4e4e4e;line-height:15px">934.3 MB</div>
<div class="a" style="left:977px;top:857.38px;width:200px;text-align:right;font-size:13px;color:#4e4e4e;line-height:15px">6.0%</div>
<div class="a" style="left:1127.30px;top:862.68px;width:4.70px;height:4.6px;background:#666"></div>
<div class="a" style="left:-157px;top:881.76px;width:200px;text-align:right;font-size:13px;color:#4e4e4e;line-height:15px">19</div>
<div class="a" style="left:56px;top:883.26px;width:12px;height:12px;border-radius:50%;background:#c4c4c4"></div>
<div class="a" style="left:451px;top:881.76px;width:200px;text-align:right;font-size:13px;color:#4e4e4e;line-height:15px">37.7 MB</div>
<div class="a" style="left:631px;top:881.76px;width:200px;text-align:right;font-size:13px;color:#4e4e4e;line-height:15px">0.2%</div>
<div class="a" style="left:796px;top:881.76px;width:200px;text-align:right;font-size:13px;color:#4e4e4e;line-height:15px">37.7 MB</div>
<div class="a" style="left:977px;top:881.76px;width:200px;text-align:right;font-size:13px;color:#4e4e4e;line-height:15px">0.2%</div>
<div class="a" style="left:-157px;top:906.16px;width:200px;text-align:right;font-size:13px;color:#4e4e4e;line-height:15px">20</div>
<div class="a" style="left:56px;top:907.66px;width:12px;height:12px;border-radius:50%;background:#c4c4c4"></div>
<div class="a" style="left:451px;top:906.16px;width:200px;text-align:right;font-size:13px;color:#4e4e4e;line-height:15px">31.5 MB</div>
<div class="a" style="left:631px;top:906.16px;width:200px;text-align:right;font-size:13px;color:#4e4e4e;line-height:15px">0.2%</div>
<div class="a" style="left:796px;top:906.16px;width:200px;text-align:right;font-size:13px;color:#4e4e4e;line-height:15px">35.1 MB</div>
<div class="a" style="left:977px;top:906.16px;width:200px;text-align:right;font-size:13px;color:#4e4e4e;line-height:15px">0.2%</div>
<div class="a" style="left:34.5px;top:930.5px;width:67px;height:16.5px;background:#fff;border:1px solid #9c9c9c;border-radius:2px"></div>
<div class="a" style="left:40.7px;top:932.5px;font-size:13px;color:#333;line-height:15px">20</div>
<svg class="a" style="left:86px;top:934px" width="14" height="10" viewBox="0 0 14 10"><path d="M2.8 2.8 L7 7 L11.2 2.8" fill="none" stroke="#222" stroke-width="1.6"/></svg>
<div class="a" style="left:108px;top:932px;font-size:13px;color:#555;line-height:15px">1 ページあたりの表示件数</div>
<div class="a" style="left:1036.5px;top:932.7px;width:15.5px;height:15.5px;border:1px solid #9a9a9a;border-radius:2px;background:#f4f4f4"></div>
<div class="tri" style="left:1042.0px;top:937.5px;border-top:3.5px solid transparent;border-bottom:3.5px solid transparent;border-right:4.5px solid #333"></div>
<div class="a" style="left:1144.5px;top:932.7px;width:15.5px;height:15.5px;border:1px solid #9a9a9a;border-radius:2px;background:#f4f4f4"></div>
<div class="tri" style="left:1151.5px;top:937.5px;border-top:3.5px solid transparent;border-bottom:3.5px solid transparent;border-left:4.5px solid #333"></div>
<div class="a" style="left:1063px;top:932.5px;font-size:13px;font-weight:bold;color:#222;line-height:15px">1</div>
<div class="a" style="left:1079px;top:932.5px;font-size:13px;color:#6d8a68;line-height:15px">2</div>
<div class="a" style="left:1095.5px;top:932.5px;font-size:13px;color:#6d8a68;line-height:15px">3</div>
<div class="a" style="left:1111.5px;top:932.5px;font-size:13px;color:#6d8a68;line-height:15px">4</div>
<div class="a" style="left:1128px;top:932.5px;font-size:13px;color:#6d8a68;line-height:15px">5</div>

</body></html>
